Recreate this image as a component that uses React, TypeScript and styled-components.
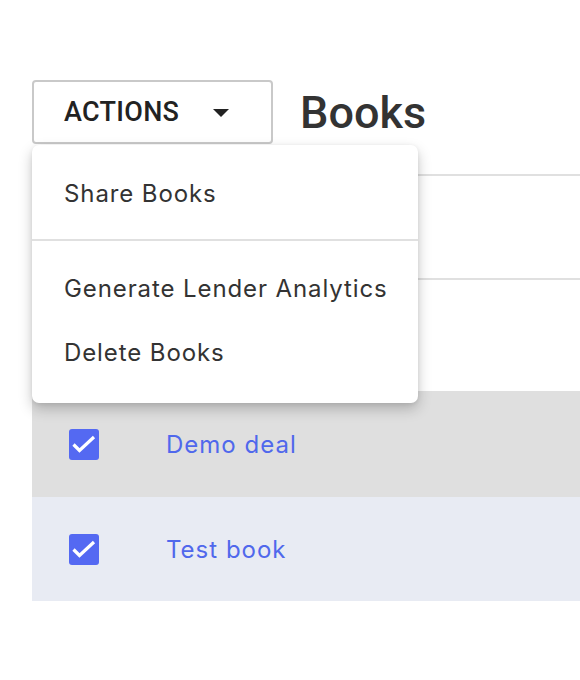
import React from 'react';
import styled, { createGlobalStyle } from 'styled-components';

const GlobalStyle = createGlobalStyle`
  html, body {
    margin: 0;
    padding: 0;
    background: #fff;
    overflow: hidden;
  }
  body {
    font-family: Roboto, 'Liberation Sans', sans-serif;
  }
`;

const Page = styled.div`
  padding: 80px 0 0 32px;
  width: 620px;
`;

const Header = styled.div`
  display: flex;
  align-items: center;
  gap: 27px;
  position: relative;
  z-index: 2;
`;

const DropdownWrap = styled.div`
  position: relative;
`;

const ActionsButton = styled.button`
  width: 241px;
  height: 64px;
  display: flex;
  align-items: center;
  justify-content: flex-start;
  gap: 34px;
  padding: 0 0 0 30px;
  border: 2px solid #c9c9c9;
  border-radius: 4px;
  background: #fff;
  font-family: Roboto, 'Liberation Sans', sans-serif;
  font-weight: 500;
  font-size: 27px;
  letter-spacing: 0.3px;
  color: #222;
  text-transform: uppercase;
`;

const Caret = styled.span`
  width: 0;
  height: 0;
  border-left: 8px solid transparent;
  border-right: 8px solid transparent;
  border-top: 8px solid #222;
  margin-top: 2px;
`;

const Title = styled.h1`
  margin: 0;
  font-family: Roboto, 'Liberation Sans', sans-serif;
  font-weight: 500;
  font-size: 45px;
  color: #333;
`;

const Menu = styled.ul`
  position: absolute;
  top: calc(100% + 1px);
  left: 0;
  width: 386px;
  margin: 0;
  padding: 16px 0 19px;
  list-style: none;
  background: #fff;
  border-radius: 7px;
  box-shadow: 0 6px 14px rgba(0, 0, 0, 0.22), 0 1px 4px rgba(0, 0, 0, 0.08);
`;

const MenuItem = styled.li`
  height: 64px;
  display: flex;
  align-items: center;
  padding: 0 32px;
  white-space: nowrap;
  font-family: Inter, 'Noto Sans', sans-serif;
  font-size: 24px;
  letter-spacing: 0.9px;
  color: #333;
`;

const MenuDivider = styled.li`
  height: 2px;
  margin: 14px 0 15px;
  background: #e0e0e0;
`;

const Table = styled.div`
  margin-top: 30px;
  position: relative;
  z-index: 1;
`;

const Row = styled.div<{ $bg?: string; $height: number; $border?: boolean }>`
  display: flex;
  align-items: center;
  height: ${(p) => p.$height}px;
  background: ${(p) => p.$bg || '#fff'};
  border-top: ${(p) => (p.$border ? '2px solid #e0e0e0' : 'none')};
  border-bottom: ${(p) => (p.$border ? '2px solid #e0e0e0' : 'none')};
`;

const CheckCell = styled.div`
  width: 134px;
  padding-left: 37px;
  box-sizing: border-box;
  display: flex;
  align-items: center;
`;

const Checkbox = styled.span`
  width: 30px;
  height: 31px;
  border-radius: 3px;
  background: #5469f2;
  display: flex;
`;

const BookLink = styled.a`
  font-family: Inter, 'Noto Sans', sans-serif;
  font-size: 24px;
  letter-spacing: 1px;
  color: #5068ec;
  text-decoration: none;
`;

const Check = () => (
  <Checkbox>
    <svg width="30" height="31" viewBox="0 0 30 31" fill="none">
      <path d="M4.5 15.5l6 6L25 8" stroke="#fff" strokeWidth="3.2" />
    </svg>
  </Checkbox>
);

const books = [
  { name: 'Demo deal', bg: '#dfdfdf', height: 106 },
  { name: 'Test book', bg: '#e8ebf3', height: 104 },
];

export default function App() {
  return (
    <Page>
      <GlobalStyle />
      <Header>
        <DropdownWrap>
          <ActionsButton>
            Actions
            <Caret />
          </ActionsButton>
          <Menu>
            <MenuItem>Share Books</MenuItem>
            <MenuDivider />
            <MenuItem>Generate Lender Analytics</MenuItem>
            <MenuItem>Delete Books</MenuItem>
          </Menu>
        </DropdownWrap>
        <Title>Books</Title>
      </Header>
      <Table>
        <Row $height={102} $border />
        <Row $height={111} />
        {books.map((b) => (
          <Row key={b.name} $bg={b.bg} $height={b.height}>
            <CheckCell>
              <Check />
            </CheckCell>
            <BookLink href="#">{b.name}</BookLink>
          </Row>
        ))}
      </Table>
    </Page>
  );
}
